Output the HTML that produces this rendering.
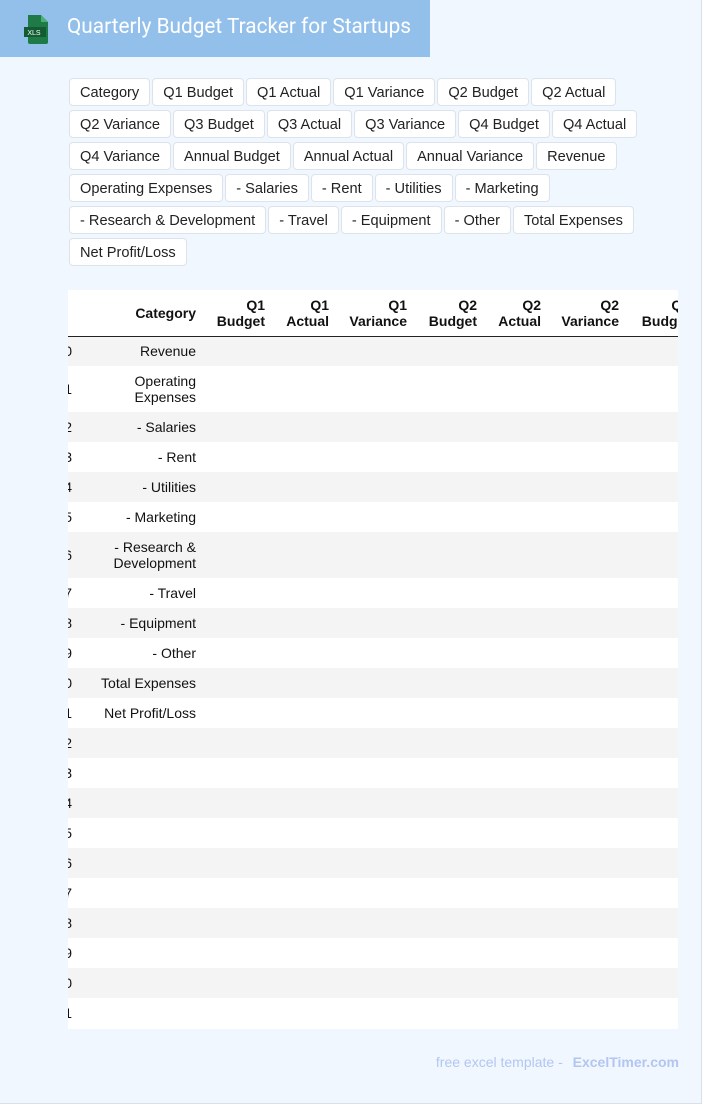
<!DOCTYPE html>
<html><head><meta charset="utf-8"><style>
*{box-sizing:border-box;margin:0;padding:0}
body{width:702px;height:1104px;background:#f0f7ff;font-family:"Liberation Sans",Arial,sans-serif;position:relative;overflow:hidden;border-right:1px solid #d8e0ea;border-bottom:1px solid #d8e0ea}
.hdr{position:absolute;left:0;top:0;width:430px;height:57px;background:#92c0ea}
.hdr .t{position:absolute;left:67px;top:15px;font-size:20.8px;color:#fff;font-family:"Roboto","Liberation Sans",sans-serif}
.tags{position:absolute;left:69px;top:78px;width:600px;display:flex;flex-wrap:wrap;gap:4px 2px}
.tag{background:#fff;border:1px solid #dde3ea;border-radius:4px;height:28px;line-height:28px;padding:0 10px;font-size:14.6px;color:#222}
.wrap{position:absolute;left:68px;top:290px;width:610px;height:739px;overflow:hidden;background:#fff}
table{border-collapse:collapse;table-layout:fixed;width:658px;margin-left:-28px;font-size:14px;color:#111}
td,th{text-align:right;padding:0 8px;overflow:hidden;white-space:normal;line-height:16px}
td:first-child,th:first-child{padding-right:7px}
th{font-weight:bold;height:46px;border-bottom:1.5px solid #222;vertical-align:middle}
td{height:30px}
tr.t2 td{height:46px}
tbody tr:nth-child(odd){background:#f4f4f4}
.ft{position:absolute;right:22px;top:1054px;font-size:14px;color:#b3c6f2}
.ft b{margin-left:6px}
</style></head><body>
<div class="hdr">
<svg style="position:absolute;left:22px;top:14px" width="30" height="32" viewBox="0 0 30 32"><path d="M6 1h13l7 7v20q0 2-2 2H8q-2 0-2-2z" fill="#1e7a46"/><path d="M19 1v7h7z" fill="#4caf73"/><rect x="2" y="13" width="22" height="10" fill="#135c33"/><text x="12" y="21" font-size="7" fill="#fff" text-anchor="middle" font-family="Liberation Sans">XLS</text></svg>
<div class="t">Quarterly Budget Tracker for Startups</div></div>
<div class="tags">
<span class="tag">Category</span><span class="tag">Q1 Budget</span><span class="tag">Q1 Actual</span><span class="tag">Q1 Variance</span><span class="tag">Q2 Budget</span><span class="tag">Q2 Actual</span>
<span class="tag">Q2 Variance</span><span class="tag">Q3 Budget</span><span class="tag">Q3 Actual</span><span class="tag">Q3 Variance</span><span class="tag">Q4 Budget</span><span class="tag">Q4 Actual</span>
<span class="tag">Q4 Variance</span><span class="tag">Annual Budget</span><span class="tag">Annual Actual</span><span class="tag">Annual Variance</span><span class="tag">Revenue</span>
<span class="tag">Operating Expenses</span><span class="tag">- Salaries</span><span class="tag">- Rent</span><span class="tag">- Utilities</span><span class="tag">- Marketing</span>
<span class="tag">- Research &amp; Development</span><span class="tag">- Travel</span><span class="tag">- Equipment</span><span class="tag">- Other</span><span class="tag">Total Expenses</span>
<span class="tag">Net Profit/Loss</span>
</div>
<div class="wrap"><table>
<colgroup><col style="width:39px"><col style="width:125px"><col style="width:69px"><col style="width:64px"><col style="width:78px"><col style="width:70px"><col style="width:64px"><col style="width:78px"><col style="width:71px"></colgroup>
<thead><tr><th></th><th>Category</th><th>Q1 Budget</th><th>Q1 Actual</th><th>Q1 Variance</th><th>Q2 Budget</th><th>Q2 Actual</th><th>Q2 Variance</th><th>Q3 Budget</th></tr></thead>
<tbody>
<tr><td>0</td><td>Revenue</td><td></td><td></td><td></td><td></td><td></td><td></td><td></td></tr>
<tr class="t2"><td>1</td><td>Operating Expenses</td><td></td><td></td><td></td><td></td><td></td><td></td><td></td></tr>
<tr><td>2</td><td>- Salaries</td><td></td><td></td><td></td><td></td><td></td><td></td><td></td></tr>
<tr><td>3</td><td>- Rent</td><td></td><td></td><td></td><td></td><td></td><td></td><td></td></tr>
<tr><td>4</td><td>- Utilities</td><td></td><td></td><td></td><td></td><td></td><td></td><td></td></tr>
<tr><td>5</td><td>- Marketing</td><td></td><td></td><td></td><td></td><td></td><td></td><td></td></tr>
<tr class="t2"><td>6</td><td>- Research &amp; Development</td><td></td><td></td><td></td><td></td><td></td><td></td><td></td></tr>
<tr><td>7</td><td>- Travel</td><td></td><td></td><td></td><td></td><td></td><td></td><td></td></tr>
<tr><td>8</td><td>- Equipment</td><td></td><td></td><td></td><td></td><td></td><td></td><td></td></tr>
<tr><td>9</td><td>- Other</td><td></td><td></td><td></td><td></td><td></td><td></td><td></td></tr>
<tr><td>10</td><td>Total Expenses</td><td></td><td></td><td></td><td></td><td></td><td></td><td></td></tr>
<tr><td>11</td><td>Net Profit/Loss</td><td></td><td></td><td></td><td></td><td></td><td></td><td></td></tr>
<tr><td>12</td><td></td><td></td><td></td><td></td><td></td><td></td><td></td><td></td></tr>
<tr><td>13</td><td></td><td></td><td></td><td></td><td></td><td></td><td></td><td></td></tr>
<tr><td>14</td><td></td><td></td><td></td><td></td><td></td><td></td><td></td><td></td></tr>
<tr><td>15</td><td></td><td></td><td></td><td></td><td></td><td></td><td></td><td></td></tr>
<tr><td>16</td><td></td><td></td><td></td><td></td><td></td><td></td><td></td><td></td></tr>
<tr><td>17</td><td></td><td></td><td></td><td></td><td></td><td></td><td></td><td></td></tr>
<tr><td>18</td><td></td><td></td><td></td><td></td><td></td><td></td><td></td><td></td></tr>
<tr><td>19</td><td></td><td></td><td></td><td></td><td></td><td></td><td></td><td></td></tr>
<tr><td>20</td><td></td><td></td><td></td><td></td><td></td><td></td><td></td><td></td></tr>
<tr><td>21</td><td></td><td></td><td></td><td></td><td></td><td></td><td></td><td></td></tr>
</tbody></table></div>
<div class="ft">free excel template - <b>ExcelTimer.com</b></div>
</body></html>
